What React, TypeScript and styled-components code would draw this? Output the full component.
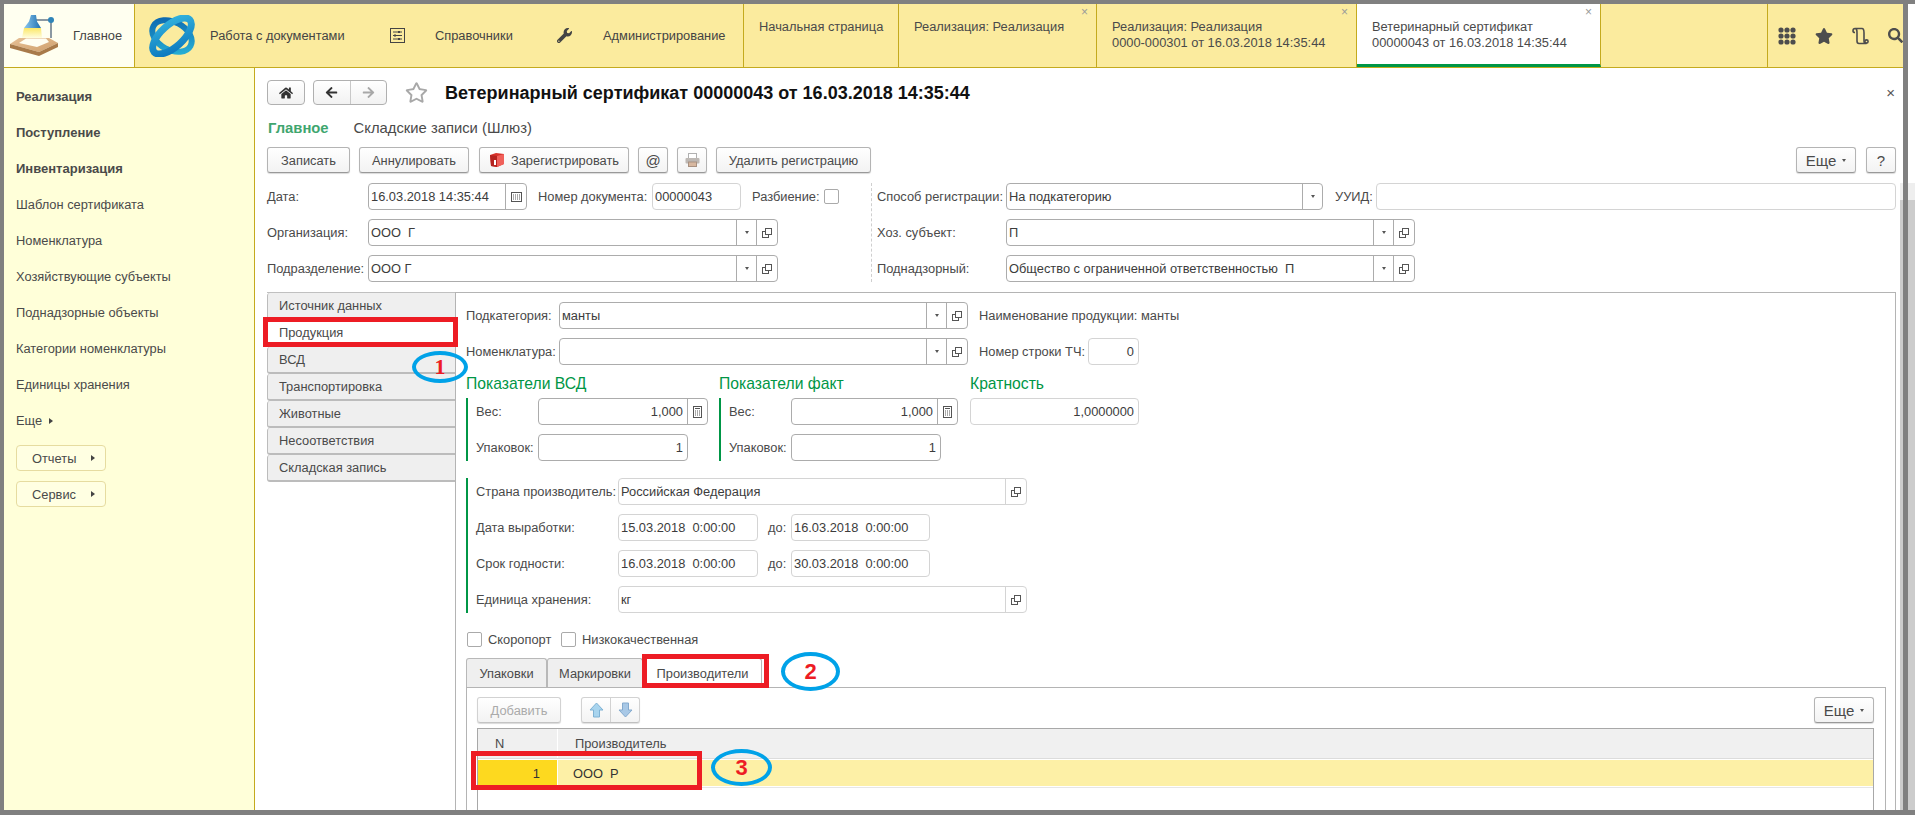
import styled, { createGlobalStyle } from "styled-components";
import { FaHome, FaArrowLeft, FaArrowRight, FaWrench, FaStar, FaSearch, FaRegStar } from "react-icons/fa";

const Global = createGlobalStyle`
  html, body { margin: 0; padding: 0; width: 1915px; height: 815px; overflow: hidden; background: #fff; }
  * { box-sizing: border-box; }
  #root { width: 1915px; height: 815px; }
  body { font-family: "Liberation Sans", Arial, sans-serif; font-size: 12.85px; color: #4a4a4a; }
`;

/* page frame */
const Page = styled.div`
  position: relative;
  width: 1915px;
  height: 815px;
  display: flex;
  overflow: hidden;
  background: #fff;
`;

const Screen = styled.div`
  width: 1908px;
  height: 815px;
  border: solid #808080;
  border-width: 4px 5px 5px 4px;
  display: flex;
  flex-direction: column;
  overflow: hidden;
`;

const OuterBar = styled.div`
  width: 7px;
  border-top: 4px solid #808080;
  border-bottom: 5px solid #808080;
  display: flex;
  flex-direction: column;
`;

const ScrollGap = styled.div<{ $h: number }>`
  height: ${(p) => p.$h}px;
  flex: none;
`;

const ScrollArrow = styled.div`
  height: 17px;
  flex: none;
  background: #eeeeee;
`;

const ScrollThumb = styled.div`
  flex: 1;
  background: #cccccc;
`;

/* top bar */
const TopBar = styled.div`
  height: 64px;
  flex: none;
  display: flex;
  background: #fbeb9e;
  border-bottom: 1px solid #c4aa1e;
`;

const HomeTab = styled.div`
  width: 131px;
  display: flex;
  align-items: center;
  padding-left: 6px;
  gap: 14px;
  background: #fffff0;
  border-right: 1px solid #c4aa1e;
  color: #444;
`;

const NavGroup = styled.div`
  display: flex;
  padding-left: 13px;
  width: 609px;
  border-right: 1px solid #c4aa1e;
`;

const NavItem = styled.div<{ $w: number }>`
  width: ${(p) => p.$w}px;
  display: flex;
  align-items: center;
  color: #444;
  white-space: nowrap;
`;

const DocTab = styled.div<{ $w: number; $active?: boolean }>`
  position: relative;
  width: ${(p) => p.$w}px;
  padding: 15px 0 0 15px;
  line-height: 16px;
  white-space: nowrap;
  color: #4a4a4a;
  border-right: 1px solid #c4aa1e;
  background: ${(p) => (p.$active ? "#fff" : "transparent")};
  border-bottom: ${(p) => (p.$active ? "3px solid #009646" : "none")};
`;

const TabClose = styled.span`
  position: absolute;
  top: 2px;
  right: 8px;
  font-size: 12px;
  line-height: 12px;
  color: #9a9a9a;
`;

const TopFill = styled.div`
  width: 167px;
  border-right: 1px solid #c4aa1e;
`;

const TopIcons = styled.div`
  flex: 1;
  display: flex;
  align-items: center;
  padding-left: 10px;
  gap: 19px;
  color: #4d4d4d;
  overflow: hidden;
`;

/* body */
const Body = styled.div`
  flex: 1;
  min-height: 0;
  display: flex;
`;

const Sidebar = styled.div`
  width: 251px;
  flex: none;
  padding: 11px 0 0 12px;
  background: #ffffd9;
  border-right: 1px solid #c4aa1e;
`;

const SideLink = styled.div<{ $bold?: boolean }>`
  height: 36px;
  line-height: 36px;
  color: #4a4a4a;
  font-size: ${(p) => (p.$bold ? "13px" : "inherit")};
  font-weight: ${(p) => (p.$bold ? 700 : 400)};
  display: flex;
  align-items: center;
  gap: 7px;
`;

const SideButton = styled.div<{ $mt: number }>`
  width: 90px;
  height: 26px;
  margin-top: ${(p) => p.$mt}px;
  padding: 0 10px 0 15px;
  display: flex;
  align-items: center;
  justify-content: space-between;
  background: #ffffe2;
  border: 1px solid #e6dca0;
  border-radius: 4px;
`;

const RightCaret = styled.span`
  width: 0;
  height: 0;
  border-left: 4px solid #444;
  border-top: 3px solid transparent;
  border-bottom: 3px solid transparent;
`;

const DownCaret = styled.span`
  width: 0;
  height: 0;
  border-top: 3px solid #555;
  border-left: 2.5px solid transparent;
  border-right: 2.5px solid transparent;
`;

const Main = styled.div`
  flex: 1;
  min-width: 0;
  display: flex;
  flex-direction: column;
  padding: 12px 4px 0 12px;
  background: #fff;
`;

const InnerScroll = styled.div`
  width: 3px;
  flex: none;
  display: flex;
  flex-direction: column;
`;

const TitleRow = styled.div`
  height: 25px;
  flex: none;
  display: flex;
  align-items: center;
`;

const SquareBtn = styled.div<{ $w: number }>`
  width: ${(p) => p.$w}px;
  height: 25px;
  display: flex;
  align-items: center;
  justify-content: center;
  border: 1px solid #b0b0b0;
  border-radius: 4px;
  background: linear-gradient(#fff, #f2f2f2);
  color: #333;
  font-size: 14px;
`;

const NavPair = styled.div`
  display: flex;
  width: 74px;
  height: 25px;
  margin-left: 8px;
  border: 1px solid #b0b0b0;
  border-radius: 4px;
  background: linear-gradient(#fff, #f2f2f2);
`;

const NavPairPart = styled.div<{ $off?: boolean }>`
  flex: 1;
  display: flex;
  align-items: center;
  justify-content: center;
  font-size: 13px;
  color: ${(p) => (p.$off ? "#a8a8a8" : "#333")};
  & + & { border-left: 1px solid #c8c8c8; }
`;

const FavStar = styled.div`
  margin: 0 17px 0 18px;
  display: flex;
  color: #a8a8a8;
  font-size: 23px;
`;

const Title = styled.h1`
  margin: 0;
  padding-top: 2px;
  font-size: 18px;
  font-weight: 700;
  color: #111;
  white-space: nowrap;
`;

const CloseForm = styled.span`
  margin-left: auto;
  margin-right: 1px;
  font-size: 15px;
  color: #555;
`;

const FormTabs = styled.div`
  height: 16px;
  margin: 15px 0 11px 1px;
  flex: none;
  display: flex;
  gap: 25px;
  font-size: 14.8px;
  line-height: 16px;
`;

const FormTab = styled.span<{ $active?: boolean }>`
  color: ${(p) => (p.$active ? "#3fa66f" : "#4a4a4a")};
  font-weight: ${(p) => (p.$active ? 700 : 400)};
`;

const Toolbar = styled.div`
  height: 26px;
  flex: none;
  display: flex;
  margin-bottom: 10px;
`;

const Btn = styled.div<{ $w: number; $ml?: number; $off?: boolean; $big?: boolean }>`
  width: ${(p) => p.$w}px;
  height: 26px;
  margin-left: ${(p) => p.$ml ?? 0}px;
  flex: none;
  display: flex;
  align-items: center;
  justify-content: center;
  gap: 6px;
  white-space: nowrap;
  font-size: ${(p) => (p.$big ? "15px" : "inherit")};
  color: ${(p) => (p.$off ? "#aaa" : "#4a4a4a")};
  background: linear-gradient(#fff, #f3f3f3);
  border: 1px solid ${(p) => (p.$off ? "#d2d2d2" : "#b4b4b4")};
  border-bottom-color: ${(p) => (p.$off ? "#c4c4c4" : "#999")};
  border-radius: 3px;
  box-shadow: 0 1px 1px rgba(0, 0, 0, 0.15);
`;

const PushRight = styled.div`
  margin-left: auto;
`;

const HeadGrid = styled.div`
  flex: none;
  display: flex;
`;

const HeadCol = styled.div<{ $w?: number }>`
  width: ${(p) => (p.$w ? `${p.$w}px` : "auto")};
  flex: ${(p) => (p.$w ? "none" : 1)};
`;

const HeadRight = styled(HeadCol)`
  padding-left: 5px;
  border-left: 1px dashed #cfcfcf;
`;

const Row = styled.div`
  height: 27px;
  display: flex;
  align-items: center;
  & + & { margin-top: 9px; }
`;

const Label = styled.span<{ $w?: number; $ml?: number }>`
  width: ${(p) => (p.$w ? `${p.$w}px` : "auto")};
  margin-left: ${(p) => p.$ml ?? 0}px;
  flex: none;
  white-space: nowrap;
  color: #4a4a4a;
`;

const FieldBox = styled.div<{ $w: number; $light?: boolean }>`
  width: ${(p) => p.$w}px;
  height: 27px;
  flex: none;
  display: flex;
  align-items: stretch;
  background: #fff;
  border: 1px solid ${(p) => (p.$light ? "#d4d4d4" : "#acacac")};
  border-radius: 4px;
`;

const FieldValue = styled.div<{ $right?: boolean }>`
  flex: 1;
  min-width: 0;
  padding: 0 4px 0 2px;
  display: flex;
  align-items: center;
  justify-content: ${(p) => (p.$right ? "flex-end" : "flex-start")};
  white-space: pre;
  color: #3c3c3c;
`;

const FieldBtn = styled.div<{ $w?: number; $light?: boolean }>`
  width: ${(p) => p.$w ?? 21}px;
  flex: none;
  display: flex;
  align-items: center;
  justify-content: center;
  border-left: 1px solid ${(p) => (p.$light ? "#d4d4d4" : "#acacac")};
`;

const Panel = styled.div`
  flex: 1;
  min-height: 0;
  margin-top: 10px;
  display: flex;
`;

const SideTabs = styled.div`
  width: 188px;
  flex: none;
  border-top: 1px solid #c0c0c0;
`;

const SideTab = styled.div<{ $active?: boolean }>`
  height: 27px;
  padding-left: 11px;
  display: flex;
  align-items: center;
  color: #4a4a4a;
  background: ${(p) => (p.$active ? "#fff" : "#efefef")};
  border: solid #bcbcbc;
  border-width: 0 0 2px 1px;
  border-radius: 3px 0 0 3px;
`;

const PanelBody = styled.div`
  flex: 1;
  min-width: 0;
  padding: 9px 0 0 10px;
  border: solid #b4b4b4;
  border-width: 1px 1px 0 1px;
  display: flex;
  flex-direction: column;
`;

const Triple = styled.div`
  flex: none;
  display: flex;
  margin-top: 9px;
`;

const Measure = styled.div<{ $w: number }>`
  width: ${(p) => p.$w}px;
  flex: none;
`;

const Heading = styled.div`
  height: 24px;
  font-size: 15.7px;
  line-height: 20px;
  color: #009646;
  white-space: nowrap;
`;

const GreenBlock = styled.div<{ $mt?: number }>`
  margin-top: ${(p) => p.$mt ?? 0}px;
  padding-left: 8px;
  border-left: 2px solid #009646;
  flex: none;
`;

const Checks = styled.div`
  height: 15px;
  margin: 19px 0 11px 1px;
  flex: none;
  display: flex;
`;

const CheckItem = styled.div<{ $w?: number }>`
  width: ${(p) => (p.$w ? `${p.$w}px` : "auto")};
  display: flex;
  align-items: center;
  gap: 6px;
  white-space: nowrap;
`;

const CheckBox = styled.span<{ $ml?: number }>`
  width: 15px;
  height: 15px;
  flex: none;
  margin-left: ${(p) => p.$ml ?? 0}px;
  background: #fff;
  border: 1px solid #aaa;
  border-radius: 2px;
`;

const BottomTabs = styled.div`
  height: 29px;
  flex: none;
  display: flex;
`;

const BottomTab = styled.div<{ $w: number; $active?: boolean }>`
  width: ${(p) => p.$w}px;
  display: flex;
  align-items: center;
  justify-content: center;
  background: ${(p) => (p.$active ? "#fff" : "#efefef")};
  border: solid #b8b8b8;
  border-width: 1px 1px 0 1px;
  border-radius: 3px 3px 0 0;
`;

const TableBox = styled.div`
  width: 1420px;
  flex: 1;
  min-height: 0;
  padding: 9px 11px 0 10px;
  border: solid #b4b4b4;
  border-width: 1px 1px 0 1px;
`;

const TableBar = styled.div`
  height: 26px;
  display: flex;
  margin-bottom: 5px;
`;

const ArrowPair = styled.div`
  width: 59px;
  height: 26px;
  margin-left: 20px;
  display: flex;
  background: linear-gradient(#fff, #f3f3f3);
  border: 1px solid #d2d2d2;
  border-bottom-color: #c0c0c0;
  border-radius: 3px;
  box-shadow: 0 1px 1px rgba(0, 0, 0, 0.12);
`;

const ArrowPart = styled.div`
  flex: 1;
  display: flex;
  align-items: center;
  justify-content: center;
  & + & { border-left: 1px solid #d2d2d2; }
`;

const Grid = styled.div`
  height: 100px;
  border: solid #a8a8a8;
  border-width: 1px 1px 0 1px;
`;

const GridHead = styled.div`
  height: 29px;
  display: flex;
  background: #f0f0f0;
`;

const HeadCell = styled.div<{ $w?: number; $pl: number }>`
  width: ${(p) => (p.$w ? `${p.$w}px` : "auto")};
  flex: ${(p) => (p.$w ? "none" : 1)};
  padding-left: ${(p) => p.$pl}px;
  display: flex;
  align-items: center;
  border-right: ${(p) => (p.$w ? "1px solid #fff" : "none")};
`;

const GridRow = styled.div`
  height: 30px;
  padding: 1px 0;
  display: flex;
  border-top: 1px solid #dcdcdc;
  border-bottom: 1px solid #e6e6e6;
`;

const NumCell = styled.div`
  width: 80px;
  padding-right: 17px;
  display: flex;
  align-items: center;
  justify-content: flex-end;
  color: #333;
  background: #fdd91f;
  border-right: 1px solid #fff;
`;

const NameCell = styled.div`
  flex: 1;
  padding-left: 15px;
  display: flex;
  align-items: center;
  white-space: pre;
  color: #333;
  background: #fdf0a6;
`;

/* hand-drawn marks over the screenshot */
const RedFrame = styled.div<{ $x: number; $y: number; $w: number; $h: number }>`
  position: absolute;
  left: ${(p) => p.$x}px;
  top: ${(p) => p.$y}px;
  width: ${(p) => p.$w}px;
  height: ${(p) => p.$h}px;
  border: 5px solid #ed1c24;
`;

const Bubble = styled.div<{ $x: number; $y: number; $w: number; $h: number; $serif?: boolean }>`
  position: absolute;
  left: ${(p) => p.$x}px;
  top: ${(p) => p.$y}px;
  width: ${(p) => p.$w}px;
  height: ${(p) => p.$h}px;
  display: flex;
  align-items: center;
  justify-content: center;
  border: 4px solid #00a2e8;
  border-radius: 50%;
  color: #ed1c24;
  font-family: ${(p) => (p.$serif ? '"Liberation Serif", serif' : '"Liberation Sans", sans-serif')};
  font-weight: 700;
  font-size: 22px;
  line-height: 1;
`;

/* drawings */
const Lamp = () => (
  <svg width="49" height="43" viewBox="0 0 49 43">
    <defs>
      <linearGradient id="lampShade" x1="0" x2="1">
        <stop offset="0" stopColor="#8cc8ee" />
        <stop offset="1" stopColor="#1f6fb0" />
      </linearGradient>
      <linearGradient id="lampCone" x1="0" y1="0" x2="0" y2="1">
        <stop offset="0" stopColor="#fbe766" />
        <stop offset="1" stopColor="#fffde0" />
      </linearGradient>
      <linearGradient id="lampBase" x1="0" y1="0" x2="1" y2="1">
        <stop offset="0" stopColor="#e6c096" />
        <stop offset="1" stopColor="#cf9f6c" />
      </linearGradient>
    </defs>
    <path d="M26 6H41V24" fill="none" stroke="#8b98a2" strokeWidth="2" />
    <circle cx="41" cy="6" r="3" fill="#2f84b8" />
    <path d="M9 24L39 24L48 29L29 38L0 30Z" fill="url(#lampBase)" />
    <path d="M0 30L29 38L48 29V33L29 42L0 34Z" fill="#a87a4a" />
    <path d="M16 24.5H36L39 28L27 33L9 29Z" fill="#fffef2" />
    <path d="M14 14H31L32 24H12Z" fill="url(#lampCone)" />
    <path d="M14 14H31L27 7.5L26 1H21L19 7.5Z" fill="url(#lampShade)" />
  </svg>
);

const Logo = () => (
  <svg width="48" height="42" viewBox="0 0 48 42">
    <defs>
      <linearGradient id="logoA" x1="0" y1="0" x2="1" y2="1">
        <stop offset="0" stopColor="#0b62ad" />
        <stop offset="1" stopColor="#29b6d8" />
      </linearGradient>
      <linearGradient id="logoB" x1="0" y1="1" x2="1" y2="0">
        <stop offset="0" stopColor="#0a76bd" />
        <stop offset="1" stopColor="#35b4de" />
      </linearGradient>
    </defs>
    <ellipse cx="24" cy="21" rx="21" ry="14" fill="none" stroke="url(#logoA)" strokeWidth="6" transform="rotate(28 24 21)" />
    <ellipse cx="24" cy="21" rx="24" ry="11" fill="none" stroke="url(#logoB)" strokeWidth="7" transform="rotate(-42 24 21)" />
  </svg>
);

const SlidersIcon = () => (
  <svg width="15" height="15" viewBox="0 0 15 15" fill="none" stroke="#444">
    <rect x="0.5" y="0.5" width="14" height="14" />
    <path d="M3 4H12M3 7.5H12M3 11H12" />
    <path d="M9 3V5M5 6.5V8.5M9 10V12" strokeWidth="2" />
  </svg>
);

const DotsIcon = () => (
  <svg width="18" height="18" viewBox="0 0 18 18" fill="#4d4d4d">
    {[3, 9, 15].map((y) =>
      [3, 9, 15].map((x) => <circle key={`${x}-${y}`} cx={x} cy={y} r="2.6" />),
    )}
  </svg>
);

const ScrollIcon = () => (
  <svg width="17" height="18" viewBox="0 0 17 18" fill="none" stroke="#4d4d4d" strokeWidth="1.6">
    <path d="M3 1.5H10C12 1.5 12 4 12 6V14C12 15.5 13 16.5 14.5 16.5H7C5.5 16.5 5 15 5 14V6C5 4 5 1.5 3 1.5C1.5 1.5 1 3 1 4C1 5 2 5.5 3 5.5" />
    <circle cx="14.5" cy="14.5" r="1.6" />
  </svg>
);

const CalendarIcon = () => (
  <svg width="11" height="10" viewBox="0 0 11 10" fill="none" stroke="#555">
    <rect x="0.5" y="0.5" width="10" height="9" />
    <path d="M2 3H9M2 5H9M2 7H9" strokeDasharray="1 1" />
  </svg>
);

const CalcIcon = () => (
  <svg width="9" height="12" viewBox="0 0 9 12" fill="none" stroke="#555">
    <rect x="0.5" y="0.5" width="8" height="11" />
    <path d="M2 2.5H7" />
    <path d="M2 5H7M2 7H7M2 9H7" strokeDasharray="1 1" />
  </svg>
);

const OpenIcon = () => (
  <svg width="10" height="10" viewBox="0 0 10 10" fill="#fff" stroke="#555">
    <rect x="0.5" y="3.5" width="6" height="6" />
    <rect x="3.5" y="0.5" width="6" height="6" />
  </svg>
);

const CubeIcon = () => (
  <svg width="16" height="16" viewBox="0 0 16 16">
    <path d="M1 3L7 1L15 2L15 12L8 15L2 14Z" fill="#d8322a" />
    <path d="M8 4L15 2L15 12L8 15Z" fill="#f0605a" />
    <path d="M1 3L8 4L8 15L2 14Z" fill="#b52420" />
    <path d="M5 8H7V13H5Z" fill="#fff" />
  </svg>
);

const PrinterIcon = () => (
  <svg width="15" height="14" viewBox="0 0 15 14">
    <rect x="3.5" y="0.5" width="8" height="5" fill="#fff" stroke="#b0b0b0" />
    <rect x="0.5" y="5" width="14" height="5.5" rx="1" fill="#bdb8b4" />
    <rect x="3.5" y="9" width="8" height="4.5" fill="#d8b8a0" stroke="#a89080" />
  </svg>
);

const ArrowUpIcon = () => (
  <svg width="15" height="16" viewBox="0 0 15 16">
    <path d="M7.5 1L14 8H10.5V15H4.5V8H1Z" fill="#a8d4ee" stroke="#7fb2d4" />
  </svg>
);

const ArrowDownIcon = () => (
  <svg width="15" height="16" viewBox="0 0 15 16">
    <path d="M7.5 15L14 8H10.5V1H4.5V8H1Z" fill="#a8c8e6" stroke="#84aace" />
  </svg>
);

/* a field with the optional buttons on its right side */
type FieldProps = {
  w: number;
  value?: React.ReactNode;
  right?: boolean;
  light?: boolean;
  date?: boolean;
  calc?: boolean;
  drop?: boolean;
  open?: boolean;
};

const Field = ({ w, value, right, light, date, calc, drop, open }: FieldProps) => (
  <FieldBox $w={w} $light={light}>
    <FieldValue $right={right}>{value}</FieldValue>
    {date && <FieldBtn><CalendarIcon /></FieldBtn>}
    {calc && <FieldBtn $w={20}><CalcIcon /></FieldBtn>}
    {drop && <FieldBtn $w={20}><DownCaret /></FieldBtn>}
    {open && <FieldBtn $light={light}><OpenIcon /></FieldBtn>}
  </FieldBox>
);

const sideLinks = [
  { text: "Реализация", bold: true },
  { text: "Поступление", bold: true },
  { text: "Инвентаризация", bold: true },
  { text: "Шаблон сертификата" },
  { text: "Номенклатура" },
  { text: "Хозяйствующие субъекты" },
  { text: "Поднадзорные объекты" },
  { text: "Категории номенклатуры" },
  { text: "Единицы хранения" },
];

const panelTabs = ["Источник данных", "Продукция", "ВСД", "Транспортировка", "Животные", "Несоответствия", "Складская запись"];

export default function App() {
  return (
    <Page>
      <Global />
      <Screen>
        <TopBar>
          <HomeTab>
            <Lamp />
            Главное
          </HomeTab>
          <NavGroup>
            <NavItem $w={62}><Logo /></NavItem>
            <NavItem $w={180}>Работа с документами</NavItem>
            <NavItem $w={45}><SlidersIcon /></NavItem>
            <NavItem $w={122}>Справочники</NavItem>
            <NavItem $w={46}><FaWrench size={15} /></NavItem>
            <NavItem $w={134}>Администрирование</NavItem>
          </NavGroup>
          <DocTab $w={155}>Начальная страница</DocTab>
          <DocTab $w={198}>
            Реализация: Реализация
            <TabClose>×</TabClose>
          </DocTab>
          <DocTab $w={260}>
            Реализация: Реализация
            <br />
            0000-000301 от 16.03.2018 14:35:44
            <TabClose>×</TabClose>
          </DocTab>
          <DocTab $w={244} $active>
            Ветеринарный сертификат
            <br />
            00000043 от 16.03.2018 14:35:44
            <TabClose>×</TabClose>
          </DocTab>
          <TopFill />
          <TopIcons>
            <DotsIcon />
            <FaStar size={18} />
            <ScrollIcon />
            <FaSearch size={15} />
          </TopIcons>
        </TopBar>

        <Body>
          <Sidebar>
            {sideLinks.map((l) => (
              <SideLink key={l.text} $bold={l.bold}>{l.text}</SideLink>
            ))}
            <SideLink>Еще <RightCaret /></SideLink>
            <SideButton $mt={6}>Отчеты <RightCaret /></SideButton>
            <SideButton $mt={10}>Сервис <RightCaret /></SideButton>
          </Sidebar>

          <Main>
            <TitleRow>
              <SquareBtn $w={38}><FaHome /></SquareBtn>
              <NavPair>
                <NavPairPart><FaArrowLeft /></NavPairPart>
                <NavPairPart $off><FaArrowRight /></NavPairPart>
              </NavPair>
              <FavStar><FaRegStar /></FavStar>
              <Title>Ветеринарный сертификат 00000043 от 16.03.2018 14:35:44</Title>
              <CloseForm>×</CloseForm>
            </TitleRow>

            <FormTabs>
              <FormTab $active>Главное</FormTab>
              <FormTab>Складские записи (Шлюз)</FormTab>
            </FormTabs>

            <Toolbar>
              <Btn $w={83}>Записать</Btn>
              <Btn $w={110} $ml={9}>Аннулировать</Btn>
              <Btn $w={150} $ml={10}><CubeIcon />Зарегистрировать</Btn>
              <Btn $w={30} $ml={9} $big>@</Btn>
              <Btn $w={30} $ml={9}><PrinterIcon /></Btn>
              <Btn $w={155} $ml={9}>Удалить регистрацию</Btn>
              <PushRight />
              <Btn $w={60} $big>Еще <DownCaret /></Btn>
              <Btn $w={30} $ml={10} $big>?</Btn>
            </Toolbar>

            <HeadGrid>
              <HeadCol $w={604}>
                <Row>
                  <Label $w={101}>Дата:</Label>
                  <Field w={159} value="16.03.2018 14:35:44" date />
                  <Label $w={114} $ml={11}>Номер документа:</Label>
                  <Field w={89} value="00000043" light />
                  <Label $w={72} $ml={11}>Разбиение:</Label>
                  <CheckBox />
                </Row>
                <Row>
                  <Label $w={101}>Организация:</Label>
                  <Field w={410} value="ООО  Г" drop open />
                </Row>
                <Row>
                  <Label $w={101}>Подразделение:</Label>
                  <Field w={410} value="ООО Г" drop open />
                </Row>
              </HeadCol>
              <HeadRight>
                <Row>
                  <Label $w={129}>Способ регистрации:</Label>
                  <Field w={317} value="На подкатегорию" drop />
                  <Label $w={41} $ml={12}>УУИД:</Label>
                  <Field w={520} light />
                </Row>
                <Row>
                  <Label $w={129}>Хоз. субъект:</Label>
                  <Field w={409} value="П" drop open />
                </Row>
                <Row>
                  <Label $w={129}>Поднадзорный:</Label>
                  <Field w={409} value="Общество с ограниченной ответственностью  П" drop open />
                </Row>
              </HeadRight>
            </HeadGrid>

            <Panel>
              <SideTabs>
                {panelTabs.map((t) => (
                  <SideTab key={t} $active={t === "Продукция"}>{t}</SideTab>
                ))}
              </SideTabs>
              <PanelBody>
                <Row>
                  <Label $w={93}>Подкатегория:</Label>
                  <Field w={409} value="манты" drop open />
                  <Label $ml={11}>Наименование продукции: манты</Label>
                </Row>
                <Row>
                  <Label $w={93}>Номенклатура:</Label>
                  <Field w={409} drop open />
                  <Label $w={109} $ml={11}>Номер строки ТЧ:</Label>
                  <Field w={51} value="0" right light />
                </Row>

                <Triple>
                  <Measure $w={253}>
                    <Heading>Показатели ВСД</Heading>
                    <GreenBlock>
                      <Row>
                        <Label $w={62}>Вес:</Label>
                        <Field w={170} value="1,000" right calc />
                      </Row>
                      <Row>
                        <Label $w={62}>Упаковок:</Label>
                        <Field w={150} value="1" right />
                      </Row>
                    </GreenBlock>
                  </Measure>
                  <Measure $w={251}>
                    <Heading>Показатели факт</Heading>
                    <GreenBlock>
                      <Row>
                        <Label $w={62}>Вес:</Label>
                        <Field w={167} value="1,000" right calc />
                      </Row>
                      <Row>
                        <Label $w={62}>Упаковок:</Label>
                        <Field w={150} value="1" right />
                      </Row>
                    </GreenBlock>
                  </Measure>
                  <Measure $w={169}>
                    <Heading>Кратность</Heading>
                    <Field w={169} value="1,0000000" right light />
                  </Measure>
                </Triple>

                <GreenBlock $mt={17}>
                  <Row>
                    <Label $w={142}>Страна производитель:</Label>
                    <Field w={409} value="Российская Федерация" light open />
                  </Row>
                  <Row>
                    <Label $w={142}>Дата выработки:</Label>
                    <Field w={140} value="15.03.2018  0:00:00" light />
                    <Label $w={23} $ml={10}>до:</Label>
                    <Field w={139} value="16.03.2018  0:00:00" light />
                  </Row>
                  <Row>
                    <Label $w={142}>Срок годности:</Label>
                    <Field w={140} value="16.03.2018  0:00:00" light />
                    <Label $w={23} $ml={10}>до:</Label>
                    <Field w={139} value="30.03.2018  0:00:00" light />
                  </Row>
                  <Row>
                    <Label $w={142}>Единица хранения:</Label>
                    <Field w={409} value="кг" light open />
                  </Row>
                </GreenBlock>

                <Checks>
                  <CheckItem $w={94}><CheckBox />Скоропорт</CheckItem>
                  <CheckItem><CheckBox />Низкокачественная</CheckItem>
                </Checks>

                <BottomTabs>
                  <BottomTab $w={81}>Упаковки</BottomTab>
                  <BottomTab $w={96}>Маркировки</BottomTab>
                  <BottomTab $w={119} $active>Производители</BottomTab>
                </BottomTabs>

                <TableBox>
                  <TableBar>
                    <Btn $w={84} $off>Добавить</Btn>
                    <ArrowPair>
                      <ArrowPart><ArrowUpIcon /></ArrowPart>
                      <ArrowPart><ArrowDownIcon /></ArrowPart>
                    </ArrowPair>
                    <PushRight />
                    <Btn $w={60} $big>Еще <DownCaret /></Btn>
                  </TableBar>
                  <Grid>
                    <GridHead>
                      <HeadCell $w={80} $pl={17}>N</HeadCell>
                      <HeadCell $pl={17}>Производитель</HeadCell>
                    </GridHead>
                    <GridRow>
                      <NumCell>1</NumCell>
                      <NameCell>ООО  Р</NameCell>
                    </GridRow>
                  </Grid>
                </TableBox>
              </PanelBody>
            </Panel>
          </Main>
          <InnerScroll>
            <ScrollGap $h={115} />
            <ScrollArrow />
            <ScrollThumb />
          </InnerScroll>
        </Body>
      </Screen>
      <OuterBar>
        <ScrollGap $h={179} />
        <ScrollArrow />
        <ScrollThumb />
      </OuterBar>

      <RedFrame $x={263} $y={317} $w={195} $h={30} />
      <RedFrame $x={642} $y={654} $w={127} $h={34} />
      <RedFrame $x={471} $y={751} $w={231} $h={39} />
      <Bubble $x={412} $y={351} $w={56} $h={32} $serif>1</Bubble>
      <Bubble $x={781} $y={652} $w={59} $h={39}>2</Bubble>
      <Bubble $x={711} $y={749} $w={61} $h={37}>3</Bubble>
    </Page>
  );
}
